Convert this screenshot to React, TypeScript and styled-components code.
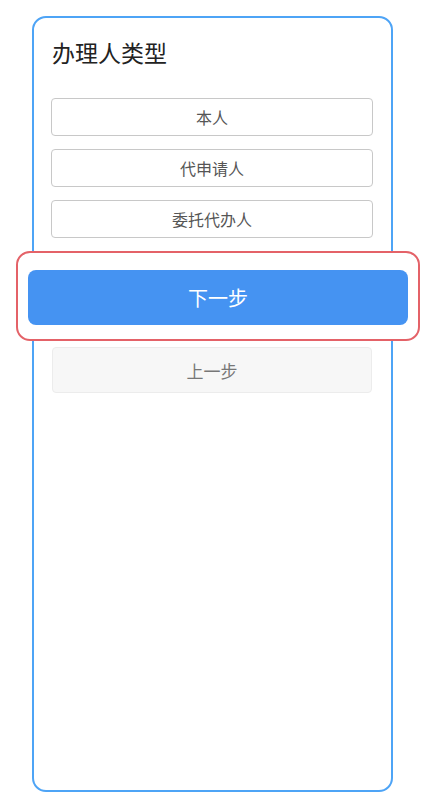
import React from "react"
import styled, { createGlobalStyle } from "styled-components"

const GlobalStyle = createGlobalStyle`
  html, body {
    margin: 0;
    padding: 0;
    background: #fff;
  }
  body {
    font-family: "Noto Sans CJK SC", "Noto Sans", sans-serif;
  }
`

const Page = styled.div`
  padding: 16px 0 12px 32px;
`

const Card = styled.div`
  box-sizing: border-box;
  width: 361px;
  height: 776px;
  border: 2px solid #4ea4f6;
  border-radius: 14px;
  padding: 23px 17px 0 17px;
  display: flex;
  flex-direction: column;
`

const Title = styled.h1`
  margin: 0 0 34px 1px;
  font-size: 23px;
  line-height: 23px;
  font-weight: 400;
  color: #222;
`

const Options = styled.div`
  display: flex;
  flex-direction: column;
  gap: 13px;
  padding-right: 1px;
`

const Option = styled.button`
  box-sizing: border-box;
  height: 38px;
  border: 1px solid #c8c8c8;
  border-radius: 4px;
  background: #fff;
  color: #555;
  font-family: inherit;
  font-size: 16px;
  cursor: pointer;
`

const Highlight = styled.div`
  position: relative;
  z-index: 1;
  box-sizing: border-box;
  margin: 13px -46px 0 -35px;
  padding: 17px 10px 14px 10px;
  border: 2px solid #e46268;
  border-radius: 14px;
  background: #fff;
`

const Primary = styled.button`
  display: block;
  width: 100%;
  height: 55px;
  border: none;
  border-radius: 8px;
  background: #4593f2;
  color: #fff;
  font-family: inherit;
  font-size: 20px;
  cursor: pointer;
`

const Secondary = styled.button`
  box-sizing: border-box;
  margin: 6px 2px 0 1px;
  height: 46px;
  border: 1px solid #ececec;
  border-radius: 4px;
  background: #f7f7f7;
  color: #777;
  font-family: inherit;
  font-size: 17px;
  cursor: pointer;
`

const options = ["本人", "代申请人", "委托代办人"]

const App = () => (
  <>
    <GlobalStyle />
    <Page>
      <Card>
        <Title>办理人类型</Title>
        <Options>
          {options.map(label => (
            <Option key={label}>{label}</Option>
          ))}
        </Options>
        <Highlight>
          <Primary>下一步</Primary>
        </Highlight>
        <Secondary>上一步</Secondary>
      </Card>
    </Page>
  </>
)

export default App
